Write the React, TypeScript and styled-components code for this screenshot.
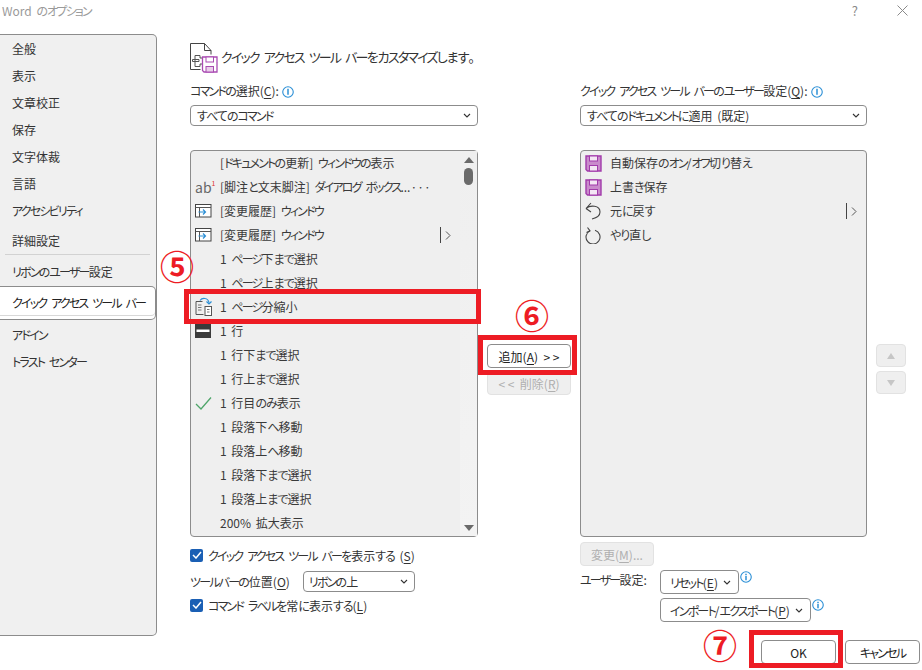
import React from "react";
import styled, { createGlobalStyle } from "styled-components";

const GlobalStyle = createGlobalStyle`
  html, body {
    margin: 0;
    padding: 0;
    background: #fff;
  }
  body {
    font-family: "Noto Sans CJK JP", "Noto Sans", sans-serif;
    font-size: 12px;
    font-feature-settings: "palt";
    color: #333;
  }
  * {
    box-sizing: border-box;
  }
  u {
    text-underline-offset: 2px;
  }
`;

// kana runs sit tighter than kanji in the dialog's UI font
const Katakana = styled.span`
  letter-spacing: -1.8px;
`;

const Hiragana = styled.span`
  letter-spacing: -1px;
`;

const JpText = styled.span`
  word-spacing: 2px;
`;

const splitKana = (text: string) =>
  text.split(/([\u30A0-\u30FF]+|[\u3040-\u309F]+)/).map((part, i) => {
    if (/^[\u30A0-\u30FF]/.test(part)) return <Katakana key={i}>{part}</Katakana>;
    if (/^[\u3040-\u309F]/.test(part)) return <Hiragana key={i}>{part}</Hiragana>;
    return part;
  });

const Jp = ({ children }: { children: React.ReactNode }) => (
  <JpText>
    {React.Children.map(children, (child) =>
      typeof child === "string" ? splitKana(child) : child
    )}
  </JpText>
);

const FloppyIcon = () => (
  <svg width="17" height="17" viewBox="0 0 17 17">
    <path d="M1 1h15v15H2.500L1 14.500z" fill="#c98bcb" stroke="#a23bab" strokeWidth="1.400" />
    <rect x="4.500" y="1" width="8" height="5" fill="#f4e6f4" stroke="#a23bab" />
    <rect x="4.500" y="10.500" width="8" height="5.500" fill="#f4e6f4" stroke="#a23bab" />
  </svg>
);

const HeaderIcon = () => (
  <svg width="30" height="32" viewBox="0 0 30 32">
    <path d="M.5 27.500V1.500h14l6.500 7v4M14.500 1.500v7h6.500M.5 27.500h10" fill="none" stroke="#444" />
    <path d="M5 13.500h5v2.500h4v6h-4v2.500H5zM2.500 17.500H9v2H2.500z" fill="#fff" stroke="#555" />
    <path d="M12.500 15h14.500v15H14l-1.500-1.500z" fill="#fff" stroke="#a94bb2" strokeWidth="1.300" />
    <rect x="16" y="15" width="7.500" height="5" fill="#fff" stroke="#a94bb2" />
    <rect x="16" y="24.500" width="7.500" height="5.500" fill="#e9cfe9" stroke="#a94bb2" />
  </svg>
);

const HistoryIcon = () => (
  <svg width="17" height="14" viewBox="0 0 17 14">
    <rect x=".5" y=".5" width="15.500" height="12.500" fill="#fff" stroke="#444" />
    <path d="M.5 3.500H16M4.500 3.500V13" stroke="#555" fill="none" />
    <path d="M3.500 8h6.500M8 5.500 10.500 8 8 10.500" stroke="#2b8fd6" strokeWidth="1.200" fill="none" />
  </svg>
);

const ShrinkIcon = () => (
  <svg width="18" height="20" viewBox="0 0 18 20">
    <path d="M7.500 4.500H1v13h7.500" fill="none" stroke="#555" />
    <path d="M3 8h3.500M3 10.500h3.500M3 13h3.500" stroke="#777" />
    <rect x="10" y="9.500" width="6.500" height="9" fill="#fff" stroke="#555" />
    <path d="M12 12.500h2.500M12 15h2.500" stroke="#777" />
    <path d="M5 3.500C7 .5 13 .5 14 5.500M11.500 4.500 14 7l2.500-2.500" fill="none" stroke="#2b8fd6" strokeWidth="1.200" />
  </svg>
);

const LineIcon = () => (
  <svg width="16" height="14" viewBox="0 0 16 14">
    <rect width="16" height="14" fill="#3b3b3b" />
    <rect x="1.500" y="5.500" width="13" height="2.500" fill="#fff" />
  </svg>
);

const CheckMark = () => (
  <svg width="17" height="14" viewBox="0 0 17 14">
    <path d="M1 8l5 5L16 1.500" fill="none" stroke="#4fa56a" strokeWidth="1.300" />
  </svg>
);

const UndoIcon = () => (
  <svg width="16" height="18" viewBox="0 0 16 18">
    <path d="M1 6.500 6 1M1 6.500 6 10M1 6.500C5 3 15 3 15 10 15 14 11 16 7 17" fill="none" stroke="#444" strokeWidth="1.100" />
  </svg>
);

const RedoIcon = () => (
  <svg width="16" height="17" viewBox="0 0 16 17">
    <path d="M5 3.200a7 7 0 1 0 5-.4" fill="none" stroke="#444" strokeWidth="1.100" transform="translate(0 .5)" />
    <path d="M2.500 .5 5 3.800 1.500 5.500" fill="none" stroke="#444" strokeWidth="1.100" />
  </svg>
);

const Chevron = () => (
  <svg width="8" height="5" viewBox="0 0 8 5">
    <path d="M1 1l3 3 3-3" fill="none" stroke="#333" strokeWidth="1.100" />
  </svg>
);

const SubChevron = () => (
  <svg width="6" height="9" viewBox="0 0 6 9">
    <path d="M1 .5l4 4-4 4" fill="none" stroke="#555" />
  </svg>
);

const InfoIcon = ({ dotted }: { dotted?: boolean }) => (
  <InfoWrap>
    <svg width="12" height="12" viewBox="0 0 13 13">
      <circle cx="6.500" cy="6.500" r="5.700" fill="#fff" stroke="#2b8fd6" strokeWidth="1.200" />
      {dotted ? (
        <path d="M6.500 3v1.500M6.500 5.500v4.500" stroke="#2b8fd6" strokeWidth="1.600" />
      ) : (
        <rect x="5.700" y="3" width="1.600" height="6.500" fill="#2b8fd6" />
      )}
    </svg>
  </InfoWrap>
);

const BoxCheck = () => (
  <CheckBox>
    <svg width="10" height="8" viewBox="0 0 10 8">
      <path d="M1 4l3 3 5-6" fill="none" stroke="#fff" strokeWidth="1.500" />
    </svg>
  </CheckBox>
);

const FootnoteIcon = () => (
  <AbIcon>
    ab<sup>1</sup>
  </AbIcon>
);

const navTop = ["全般", "表示", "文章校正", "保存", "文字体裁", "言語", "アクセシビリティ"];

type Cmd = { icon?: React.ReactNode; text: string; sub?: boolean };

const commands: Cmd[] = [
  { text: "[ドキュメントの更新] ウィンドウの表示" },
  { icon: <FootnoteIcon />, text: "[脚注と文末脚注] ダイアログ ボックス...···" },
  { icon: <HistoryIcon />, text: "[変更履歴] ウィンドウ" },
  { icon: <HistoryIcon />, text: "[変更履歴] ウィンドウ", sub: true },
  { text: "1 ページ下まで選択" },
  { text: "1 ページ上まで選択" },
  { icon: <ShrinkIcon />, text: "1 ページ分縮小" },
  { icon: <LineIcon />, text: "1 行" },
  { text: "1 行下まで選択" },
  { text: "1 行上まで選択" },
  { icon: <CheckMark />, text: "1 行目のみ表示" },
  { text: "1 段落下へ移動" },
  { text: "1 段落上へ移動" },
  { text: "1 段落下まで選択" },
  { text: "1 段落上まで選択" },
  { text: "200% 拡大表示" },
];

const toolbar: Cmd[] = [
  { icon: <FloppyIcon />, text: "自動保存のオン/オフ切り替え" },
  { icon: <FloppyIcon />, text: "上書き保存" },
  { icon: <UndoIcon />, text: "元に戻す", sub: true },
  { icon: <RedoIcon />, text: "やり直し" },
];

const renderRows = (rows: Cmd[]) =>
  rows.map((row, i) => (
    <Row key={i}>
      <RowIcon>{row.icon}</RowIcon>
      <RowText>
        <Jp>{row.text}</Jp>
      </RowText>
      {row.sub && (
        <SubMarker>
          <SubChevron />
        </SubMarker>
      )}
    </Row>
  ));

export default function App() {
  return (
    <Page>
      <GlobalStyle />
      <TitleBar>
        <Title>
          <Jp>Word のオプション</Jp>
        </Title>
        <HelpMark>?</HelpMark>
        <svg width="13" height="13" viewBox="0 0 13 13">
          <path d="M1.500 1.500l10 10M11.500 1.500l-10 10" stroke="#8a8a8a" />
        </svg>
      </TitleBar>
      <Body>
        <Nav>
          {navTop.map((item) => (
            <NavItem key={item}>
              <Jp>{item}</Jp>
            </NavItem>
          ))}
          <NavItem $gap>詳細設定</NavItem>
          <NavDivider />
          <NavItem>
            <Jp>リボンのユーザー設定</Jp>
          </NavItem>
          <NavSelected>
            <Jp>クイック アクセス ツール バー</Jp>
          </NavSelected>
          <NavItem $after>
            <Jp>アドイン</Jp>
          </NavItem>
          <NavItem>
            <Jp>トラスト センター</Jp>
          </NavItem>
        </Nav>
        <Main>
          <Header>
            <HeaderIcon />
            <HeaderText>
              <Jp>クイック アクセス ツール バーをカスタマイズします。</Jp>
            </HeaderText>
          </Header>
          <Columns>
            <Column>
              <Label>
                <Jp>
                  コマンドの選択(<u>C</u>):
                </Jp>
                <InfoIcon />
              </Label>
              <Select>
                <Jp>すべてのコマンド</Jp>
                <Chevron />
              </Select>
              <ListBox>
                <Rows>{renderRows(commands)}</Rows>
                <ScrollTrack>
                  <ArrowUp />
                  <Thumb />
                  <TrackSpacer />
                  <ArrowDown />
                </ScrollTrack>
              </ListBox>
              <OptionRow>
                <BoxCheck />
                <Jp>
                  クイック アクセス ツール バーを表示する (<u>S</u>)
                </Jp>
              </OptionRow>
              <PositionRow>
                <Jp>
                  ツールバーの位置(<u>O</u>)
                </Jp>
                <SmallSelect>
                  <Jp>リボンの上</Jp>
                  <Chevron />
                </SmallSelect>
              </PositionRow>
              <OptionRow>
                <BoxCheck />
                <Jp>
                  コマンド ラベルを常に表示する(<u>L</u>)
                </Jp>
              </OptionRow>
            </Column>
            <MiddleColumn>
              <ActionButton>
                追加(<u>A</u>){"  > >"}
              </ActionButton>
              <ActionButton disabled>
                {"< <  "}削除(<u>R</u>)
              </ActionButton>
            </MiddleColumn>
            <Column>
              <Label>
                <Jp>
                  クイック アクセス ツール バーのユーザー設定(<u>Q</u>):
                </Jp>
                <InfoIcon />
              </Label>
              <Select>
                <Jp>すべてのドキュメントに適用 (既定)</Jp>
                <Chevron />
              </Select>
              <ListBox>
                <Rows>{renderRows(toolbar)}</Rows>
              </ListBox>
              <ChangeButton disabled>
                変更(<u>M</u>)...
              </ChangeButton>
              <UserRow>
                <UserLabel>
                  <Jp>ユーザー設定:</Jp>
                </UserLabel>
                <UserButtons>
                  <MenuLine>
                    <MenuButton>
                      <Jp>
                        リセット(<u>E</u>){" "}
                      </Jp>
                      <Chevron />
                    </MenuButton>
                    <InfoIcon dotted />
                  </MenuLine>
                  <MenuLine>
                    <MenuButton>
                      <Jp>
                        インポート/エクスポート(<u>P</u>){" "}
                      </Jp>
                      <Chevron />
                    </MenuButton>
                    <InfoIcon dotted />
                  </MenuLine>
                </UserButtons>
              </UserRow>
            </Column>
            <MoveColumn>
              <MoveButton>
                <ArrowUp $light />
              </MoveButton>
              <MoveButton>
                <ArrowDown $light />
              </MoveButton>
            </MoveColumn>
          </Columns>
        </Main>
      </Body>
      <Footer>
        <FooterButton>OK</FooterButton>
        <FooterButton>
          <Jp>キャンセル</Jp>
        </FooterButton>
      </Footer>

      <RedFrame $x={184} $y={289} $w={297} $h={35} />
      <RedFrame $x={478} $y={335} $w={99} $h={40} />
      <RedFrame $x={749} $y={630} $w={94} $h={38} />
      <StepMark $x={177} $y={266}>⑤</StepMark>
      <StepMark $x={532} $y={315}>⑥</StepMark>
      <StepMark $x={720} $y={645}>⑦</StepMark>
    </Page>
  );
}

const Page = styled.div`
  position: relative;
  width: 922px;
  height: 670px;
  overflow: hidden;
  background: #fff;
`;

const TitleBar = styled.div`
  height: 34px;
  padding: 0 13px 14px 2px;
  display: flex;
  align-items: center;
`;

const Title = styled.div`
  flex: 1;
  color: #9a9a9a;
  font-size: 12px;
`;

const HelpMark = styled.div`
  color: #8a8a8a;
  font-size: 13px;
  margin-right: 38px;
`;

const Body = styled.div`
  display: flex;
  height: 602px;
`;

const Nav = styled.div`
  width: 157px;
  flex: none;
  background: #f0f0f0;
  border: 1px solid #8c8c8c;
  border-left: none;
  border-radius: 0 5px 5px 0;
`;

const NavItem = styled.div<{ $gap?: boolean; $after?: boolean }>`
  height: 27px;
  line-height: 27px;
  padding-left: 12px;
  color: #333;
  white-space: nowrap;
  margin-top: ${({ $gap, $after }) => ($gap ? "3px" : $after ? "1px" : "0")};
`;

const NavDivider = styled.div`
  height: 1px;
  margin: 0 6px 3px 5px;
  background: #d2d2d2;
`;

const NavSelected = styled.div`
  height: 34px;
  margin-top: 1px;
  line-height: 31px;
  padding-left: 12px;
  background: #fff;
  color: #222;
  white-space: nowrap;
  border: 1px solid #8c8c8c;
  border-left: none;
  border-radius: 0 5px 5px 0;
  box-shadow: inset 0 -3px 0 #fff, inset 0 -4px 0 #d8d8d8;
`;

const Main = styled.div`
  flex: 1;
  padding-left: 33px;
`;

const Header = styled.div`
  height: 49px;
  padding-top: 8px;
  display: flex;
  align-items: flex-start;
`;

const HeaderText = styled.div`
  margin: 5px 0 0 1px;
  font-size: 13px;
  color: #333;
`;

const Columns = styled.div`
  display: grid;
  grid-template-columns: 288px 102px 287px auto;
`;

const Column = styled.div`
  display: flex;
  flex-direction: column;
  min-width: 0;
`;

const Label = styled.div`
  height: 16px;
  line-height: 16px;
  display: flex;
  color: #333;
  white-space: pre;
`;

const InfoWrap = styled.span`
  display: inline-flex;
  align-self: flex-start;
  margin: 3px 0 0 3px;
`;

const Select = styled.div`
  height: 21px;
  margin-top: 6px;
  padding: 0 6px 0 6px;
  display: flex;
  align-items: center;
  justify-content: space-between;
  background: #fff;
  border: 1px solid #8c8c8c;
  border-radius: 4px;
  color: #333;
`;

const ListBox = styled.div`
  height: 387px;
  margin-top: 24px;
  padding-left: 4px;
  display: flex;
  background: #efefef;
  border: 1px solid #8c8c8c;
  border-radius: 4px;
`;

const Rows = styled.div`
  flex: 1;
  min-width: 0;
`;

const Row = styled.div`
  height: 24px;
  display: flex;
  align-items: center;
  padding-right: 8px;
  color: #3a3a3a;
  white-space: pre;
`;

const RowIcon = styled.div`
  width: 25px;
  flex: none;
  display: flex;
  align-items: center;
`;

const RowText = styled.div`
  flex: 1;
  padding-bottom: 2px;
`;

const SubMarker = styled.div`
  width: 12px;
  height: 16px;
  padding-left: 4px;
  display: flex;
  align-items: center;
  border-left: 1px solid #444;
`;

const AbIcon = styled.span`
  color: #666;
  font-size: 14px;
  line-height: 1;
  sup {
    color: #d33;
    font-size: 7px;
    vertical-align: 7px;
    line-height: 0;
  }
`;

const ScrollTrack = styled.div`
  width: 17px;
  flex: none;
  padding: 6px 0 5px;
  display: flex;
  flex-direction: column;
  align-items: center;
  background: linear-gradient(#efefef, #f3f3f3);
`;

const ArrowUp = styled.div<{ $light?: boolean }>`
  width: 0;
  height: 0;
  border-left: ${({ $light }) => ($light ? "4px" : "5px")} solid transparent;
  border-right: ${({ $light }) => ($light ? "4px" : "5px")} solid transparent;
  border-bottom: 6px solid ${({ $light }) => ($light ? "#c6c6c6" : "#6a6a6a")};
`;

const ArrowDown = styled.div<{ $light?: boolean }>`
  width: 0;
  height: 0;
  border-left: ${({ $light }) => ($light ? "4px" : "5px")} solid transparent;
  border-right: ${({ $light }) => ($light ? "4px" : "5px")} solid transparent;
  border-top: 6px solid ${({ $light }) => ($light ? "#c6c6c6" : "#6a6a6a")};
`;

const Thumb = styled.div`
  width: 9px;
  height: 17px;
  margin-top: 5px;
  background: #6a6a6a;
  border-radius: 5px;
`;

const TrackSpacer = styled.div`
  flex: 1;
`;

const OptionRow = styled.div`
  height: 16px;
  margin-top: 10px;
  display: flex;
  align-items: center;
  color: #333;
  white-space: pre;
  &:last-child {
    margin-top: 5px;
  }
`;

const CheckBox = styled.span`
  width: 13px;
  height: 13px;
  margin-right: 5px;
  flex: none;
  display: inline-flex;
  align-items: center;
  justify-content: center;
  background: #1a5fb4;
  border-radius: 2px;
`;

const PositionRow = styled.div`
  height: 21px;
  margin-top: 8px;
  display: flex;
  align-items: center;
  color: #333;
  white-space: pre;
`;

const SmallSelect = styled.div`
  width: 112px;
  height: 21px;
  margin-left: 13px;
  padding: 0 6px 0 5px;
  display: flex;
  align-items: center;
  justify-content: space-between;
  background: #fff;
  border: 1px solid #8c8c8c;
  border-radius: 4px;
`;

const MiddleColumn = styled.div`
  padding: 261px 9px 0;
  display: flex;
  flex-direction: column;
  gap: 4px;
`;

const ActionButton = styled.div<{ disabled?: boolean }>`
  height: ${({ disabled }) => (disabled ? "23px" : "24px")};
  display: flex;
  align-items: center;
  justify-content: center;
  white-space: pre;
  color: ${({ disabled }) => (disabled ? "#b0b0b0" : "#222")};
  background: ${({ disabled }) => (disabled ? "#efefef" : "#fff")};
  border: 1px solid ${({ disabled }) => (disabled ? "#e2e2e2" : "#8c8c8c")};
  border-radius: 4px;
`;

const ChangeButton = styled(ActionButton)`
  width: 74px;
  height: 24px;
  margin-top: 5px;
`;

const UserRow = styled.div`
  margin-top: 4px;
  display: flex;
`;

const UserLabel = styled.div`
  width: 80px;
  line-height: 18px;
  padding-top: 1px;
  color: #333;
`;

const UserButtons = styled.div`
  display: flex;
  flex-direction: column;
  gap: 4px;
`;

const MenuLine = styled.div`
  display: flex;
  align-items: flex-start;
  ${InfoWrap} {
    margin: 1px 0 0 1px;
  }
`;

const MenuButton = styled.div`
  height: 24px;
  padding: 0 7px 0 9px;
  display: flex;
  align-items: center;
  white-space: pre;
  color: #333;
  background: #fff;
  border: 1px solid #8c8c8c;
  border-radius: 4px;
`;

const MoveColumn = styled.div`
  margin-left: 9px;
  padding-top: 261px;
  display: flex;
  flex-direction: column;
  gap: 4px;
`;

const MoveButton = styled.div`
  width: 30px;
  height: 23px;
  display: flex;
  align-items: center;
  justify-content: center;
  background: #efefef;
  border: 1px solid #e2e2e2;
  border-radius: 4px;
`;

const Footer = styled.div`
  margin-top: 4px;
  padding-right: 2px;
  display: flex;
  justify-content: flex-end;
  gap: 9px;
`;

const FooterButton = styled.div`
  width: 75px;
  height: 24px;
  display: flex;
  align-items: center;
  justify-content: center;
  color: #222;
  background: #fff;
  border: 1px solid #8c8c8c;
  border-radius: 4px;
`;

const RedFrame = styled.div<{ $x: number; $y: number; $w: number; $h: number }>`
  position: absolute;
  left: ${({ $x }) => $x}px;
  top: ${({ $y }) => $y}px;
  width: ${({ $w }) => $w}px;
  height: ${({ $h }) => $h}px;
  border: 5px solid #ed1c24;
`;

const StepMark = styled.div<{ $x: number; $y: number }>`
  position: absolute;
  left: ${({ $x }) => $x - 20}px;
  top: ${({ $y }) => $y - 20}px;
  width: 40px;
  height: 40px;
  line-height: 40px;
  text-align: center;
  color: #ed1c24;
  font-size: 34px;
  font-weight: 700;
`;
